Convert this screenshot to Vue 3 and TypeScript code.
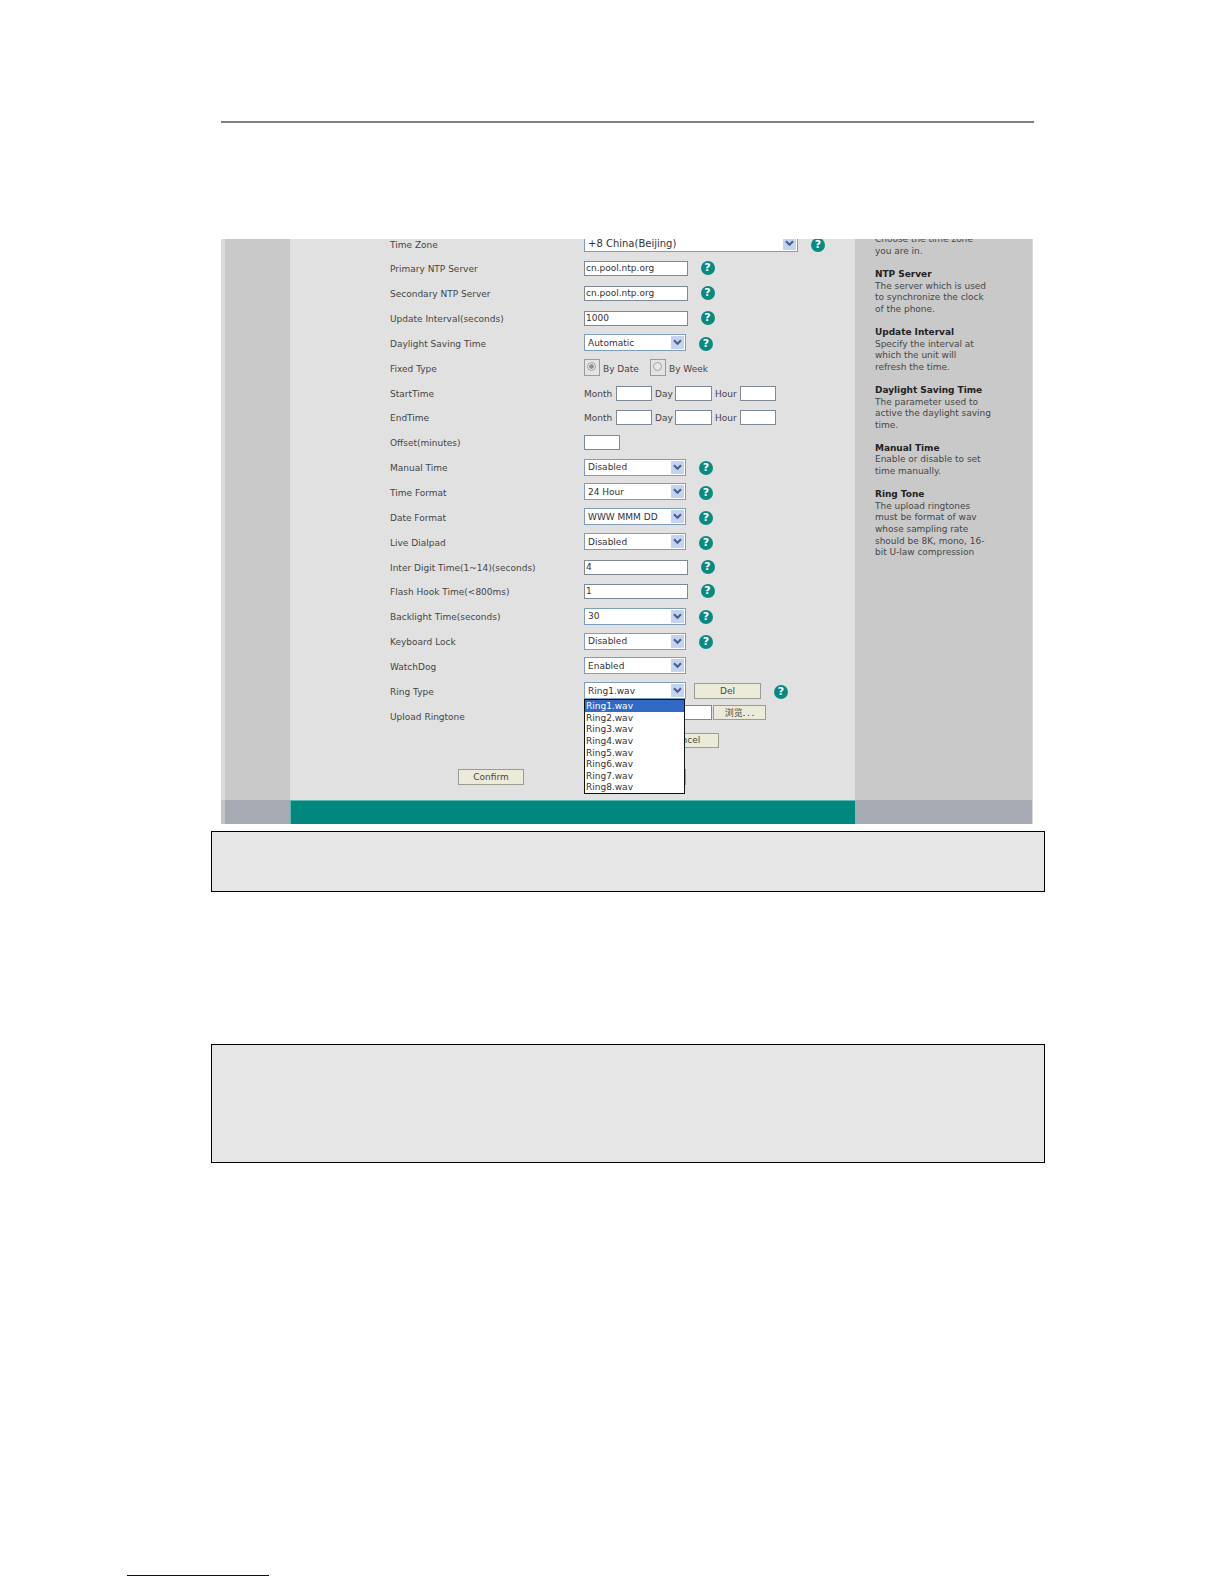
<script setup lang="ts">
type Row = {
  label: string
  kind: 'text' | 'select' | 'wide' | 'radio' | 'time' | 'short' | 'ring' | 'upload'
  value?: string
  help?: boolean
}

const rows: Row[] = [
  { label: 'Time Zone', kind: 'wide', value: '+8 China(Beijing)', help: true },
  { label: 'Primary NTP Server', kind: 'text', value: 'cn.pool.ntp.org', help: true },
  { label: 'Secondary NTP Server', kind: 'text', value: 'cn.pool.ntp.org', help: true },
  { label: 'Update Interval(seconds)', kind: 'text', value: '1000', help: true },
  { label: 'Daylight Saving Time', kind: 'select', value: 'Automatic', help: true },
  { label: 'Fixed Type', kind: 'radio' },
  { label: 'StartTime', kind: 'time' },
  { label: 'EndTime', kind: 'time' },
  { label: 'Offset(minutes)', kind: 'short' },
  { label: 'Manual Time', kind: 'select', value: 'Disabled', help: true },
  { label: 'Time Format', kind: 'select', value: '24 Hour', help: true },
  { label: 'Date Format', kind: 'select', value: 'WWW MMM DD', help: true },
  { label: 'Live Dialpad', kind: 'select', value: 'Disabled', help: true },
  { label: 'Inter Digit Time(1~14)(seconds)', kind: 'text', value: '4', help: true },
  { label: 'Flash Hook Time(<800ms)', kind: 'text', value: '1', help: true },
  { label: 'Backlight Time(seconds)', kind: 'select', value: '30', help: true },
  { label: 'Keyboard Lock', kind: 'select', value: 'Disabled', help: true },
  { label: 'WatchDog', kind: 'select', value: 'Enabled' },
  { label: 'Ring Type', kind: 'ring', value: 'Ring1.wav' },
  { label: 'Upload Ringtone', kind: 'upload' },
]

const ringtones = ['Ring1.wav', 'Ring2.wav', 'Ring3.wav', 'Ring4.wav', 'Ring5.wav', 'Ring6.wav', 'Ring7.wav', 'Ring8.wav']

const notes = [
  { title: '', lines: ['Choose the time zone', 'you are in.'] },
  { title: 'NTP Server', lines: ['The server which is used', 'to synchronize the clock', 'of the phone.'] },
  { title: 'Update Interval', lines: ['Specify the interval at', 'which the unit will', 'refresh the time.'] },
  { title: 'Daylight Saving Time', lines: ['The parameter used to', 'active the daylight saving', 'time.'] },
  { title: 'Manual Time', lines: ['Enable or disable to set', 'time manually.'] },
  { title: 'Ring Tone', lines: ['The upload ringtones', 'must be format of wav', 'whose sampling rate', 'should be 8K, mono, 16-', 'bit U-law compression'] },
]
</script>

<template>
  <div class="page">
    <div class="rule"></div>

    <section class="shot">
      <div class="side-left"></div>

      <div class="main">
        <div v-for="row in rows" :key="row.label" class="row">
          <div class="label">{{ row.label }}</div>

          <template v-if="row.kind === 'text'">
            <div class="input">{{ row.value }}</div>
            <span class="help help-text">?</span>
          </template>

          <template v-else-if="row.kind === 'select' || row.kind === 'wide' || row.kind === 'ring'">
            <div class="select" :class="{ 'select-wide': row.kind === 'wide' }">
              <span class="select-value">{{ row.value }}</span>
              <span class="arrow">
                <svg width="9" height="7" viewBox="0 0 9 7"><path d="M1 1.2 4.5 4.8 8 1.2" fill="none" stroke="#46608a" stroke-width="2" /></svg>
              </span>
            </div>
            <span v-if="row.help" class="help">?</span>
            <template v-if="row.kind === 'ring'">
              <div class="btn btn-del">Del</div>
              <span class="help">?</span>
              <div class="dropdown">
                <div v-for="(tone, i) in ringtones" :key="tone" class="option" :class="{ active: i === 0 }">{{ tone }}</div>
              </div>
            </template>
          </template>

          <template v-else-if="row.kind === 'radio'">
            <span class="radio-box"><span class="radio on"></span></span>
            <span class="radio-label">By Date</span>
            <span class="radio-box box-two"><span class="radio"></span></span>
            <span class="radio-label">By Week</span>
          </template>

          <template v-else-if="row.kind === 'time'">
            <span class="unit unit-month">Month</span>
            <div class="input input-time"></div>
            <span class="unit unit-day">Day</span>
            <div class="input input-time wider"></div>
            <span class="unit unit-hour">Hour</span>
            <div class="input input-time"></div>
          </template>

          <template v-else-if="row.kind === 'short'">
            <div class="input input-short"></div>
          </template>

          <template v-else-if="row.kind === 'upload'">
            <div class="input input-file"></div>
            <div class="btn btn-browse">浏览. . .</div>
          </template>
        </div>

        <div class="action-one">
          <div class="btn btn-cancel-upload">Cancel</div>
        </div>
        <div class="action-two">
          <div class="btn btn-confirm">Confirm</div>
          <div class="btn btn-reset">Cancel</div>
        </div>
      </div>

      <aside class="notes">
        <div v-for="note in notes" :key="note.title" class="note">
          <div v-if="note.title" class="note-title">{{ note.title }}</div>
          <div v-for="line in note.lines" :key="line">{{ line }}</div>
        </div>
      </aside>

      <div class="bar-side bar-left"></div>
      <div class="bar-teal"></div>
      <div class="bar-side bar-right"></div>
    </section>

    <div class="note-box box-one"></div>
    <div class="note-box box-two-big"></div>
    <div class="foot-link"></div>
  </div>
</template>

<style scoped>
.page {
  position: relative;
  width: 1224px;
  height: 1584px;
  padding-top: 121px;
  box-sizing: border-box;
  background: #fff;
  overflow: hidden;
  font-family: "DejaVu Sans", sans-serif;
}
.rule {
  width: 813px;
  height: 2px;
  margin-left: 221px;
  background: #808080;
}
.shot {
  display: grid;
  grid-template-columns: 69px 565px 178px;
  grid-template-rows: 561px 24px;
  width: 812px;
  margin: 116px 0 0 221px;
  overflow: hidden;
}
.side-left {
  background: #c9c9c9;
  border-left: 4px solid #dcdcdc;
}
.main {
  background: #e1e1e1;
  padding: 0 0 0 100px;
  color: #454545;
  font-size: 9px;
  min-width: 0;
}
.row {
  position: relative;
  display: flex;
  align-items: center;
  height: 24.85px;
}
.row:first-child {
  margin-top: -7.4px;
}
.label {
  width: 194px;
  flex: none;
  white-space: nowrap;
  padding-top: 1px;
}
.input {
  flex: none;
  box-sizing: border-box;
  width: 104px;
  height: 15px;
  margin-top: 0;
  padding-left: 1px;
  background: #fff;
  border: 1px solid #7d8a96;
  line-height: 13px;
  color: #333;
  white-space: nowrap;
}
.select {
  flex: none;
  display: flex;
  align-items: center;
  justify-content: space-between;
  box-sizing: border-box;
  width: 102px;
  height: 17px;
  margin-top: -1px;
  padding: 0 1px 0 3px;
  background: #fff;
  border: 1px solid #7f9db9;
  color: #333;
}
.select-wide {
  width: 214px;
}
.select-wide .select-value {
  font-size: 10px;
}
.select-value {
  white-space: nowrap;
}
.arrow {
  display: flex;
  align-items: center;
  justify-content: center;
  width: 13px;
  height: 13px;
  background: #c3d3f0;
}
.help {
  flex: none;
  width: 14px;
  height: 14px;
  margin: 1px 0 0 13px;
  border-radius: 50%;
  background: #078a80;
  color: #fff;
  font: bold 11px/14px "DejaVu Sans", sans-serif;
  text-align: center;
}
.help-text {
  margin: -1px 0 0 12px;
  position: relative;
  left: 0.5px;
}
.radio-box {
  flex: none;
  display: flex;
  align-items: center;
  justify-content: center;
  box-sizing: border-box;
  width: 16px;
  height: 17px;
  margin-top: -1px;
  background: #e4e4e4;
  border: 1px solid #9a9a9a;
}
.box-two {
  margin-left: 4px;
}
.radio {
  box-sizing: border-box;
  width: 9px;
  height: 9px;
  margin: -2px 0 0 -1px;
  border-radius: 50%;
  background: #e8e8e8;
  border: 1px solid #a0a0a0;
}
.radio.on {
  background: radial-gradient(circle, #8f8f8f 0 2px, #e8e8e8 2.5px);
}
.radio-label {
  margin: 2px 0 0 3px;
  width: 43px;
  white-space: nowrap;
}
.radio-label:last-child {
  width: auto;
}
.unit {
  flex: none;
  white-space: nowrap;
  padding-top: 1px;
}
.unit-month {
  width: 32px;
}
.unit-day {
  width: 20px;
  margin-left: 3px;
}
.unit-hour {
  width: 25px;
  margin-left: 3px;
}
.input-time {
  width: 36px;
}
.input-time.wider {
  width: 37px;
}
.input-short {
  width: 36px;
}
.input-file {
  width: 128px;
  margin-top: -7px;
}
.btn {
  flex: none;
  box-sizing: border-box;
  background: #ecebd9;
  border: 1px solid #9b9b8f;
  color: #454545;
  text-align: center;
  white-space: nowrap;
}
.btn-del {
  width: 67px;
  height: 16px;
  margin: -1px 0 0 8px;
  line-height: 14px;
}
.btn-browse {
  width: 53px;
  height: 15px;
  margin: -7px 0 0 1px;
  line-height: 13px;
  font-family: "Noto Sans CJK SC", "DejaVu Sans", sans-serif;
}
.dropdown {
  position: absolute;
  left: 194px;
  top: 20.4px;
  z-index: 2;
  box-sizing: border-box;
  width: 101px;
  height: 95px;
  background: #fff;
  border: 1px solid #111;
  color: #333;
  font-size: 9px;
}
.option {
  height: 11.6px;
  padding-left: 1px;
  line-height: 12.6px;
}
.option.active {
  background: #316ac5;
  color: #fff;
}
.action-one {
  display: flex;
  height: 15px;
  margin-top: 4.4px;
  padding-left: 261px;
}
.btn-cancel-upload {
  width: 68px;
  height: 15px;
  line-height: 13px;
}
.action-two {
  display: flex;
  height: 16px;
  margin: 21px 0 0 68px;
}
.btn-confirm {
  width: 66px;
  height: 16px;
  line-height: 14px;
}
.btn-reset {
  width: 66px;
  height: 16px;
  margin-left: 96px;
  line-height: 14px;
}
.notes {
  background: #c9c9c9;
  border-right: 1px solid #d8d8d8;
  padding-left: 20px;
  color: #474747;
  font-size: 9px;
  letter-spacing: -0.03px;
  line-height: 11.6px;
  white-space: nowrap;
}
.note {
  margin-bottom: 11.6px;
}
.note:first-child {
  margin-top: -4.8px;
}
.note-title {
  color: #222;
  font-weight: bold;
}
.bar-side {
  background: #a6aab2;
}
.bar-left {
  border-left: 4px solid #c4c4c4;
}
.bar-right {
  border-right: 1px solid #d8d8d8;
}
.bar-teal {
  background: #00877e;
  border-top: 1px solid #5fb7b0;
  border-left: 1px solid #5fb7b0;
}
.note-box {
  box-sizing: border-box;
  width: 834px;
  margin-left: 211px;
  background: #e6e6e6;
  border: 1px solid #000;
}
.box-one {
  height: 61px;
  margin-top: 7px;
}
.box-two-big {
  height: 119px;
  margin-top: 152px;
}
.foot-link {
  width: 142px;
  height: 1px;
  margin: 412px 0 0 127px;
  background: #000080;
}
</style>
